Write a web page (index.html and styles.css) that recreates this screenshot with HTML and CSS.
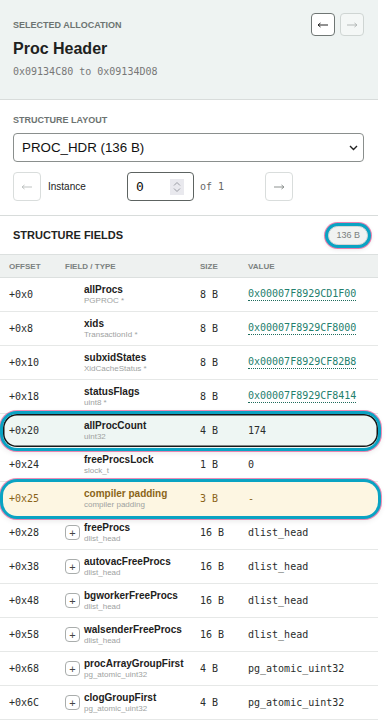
FILE: index.html
```html
<!DOCTYPE html>
<html>
  <head>
    <title>Proc Header - Structure</title>
    <link rel="stylesheet" href="styles.css">
  </head>
  <body>
    <div class="panel">
      <section class="alloc">
        <div class="alloc-top">
          <div class="label">Selected Allocation</div>
          <div class="nav">
            <button class="navbtn"><svg width="12" height="8" viewBox="0 0 12 8"><path d="M1 4h10M1 4l2.5-2M1 4l2.5 2" stroke="currentColor" fill="none" stroke-width="1"/></svg></button>
            <button class="navbtn off"><svg width="12" height="8" viewBox="0 0 12 8"><path d="M1 4h10M11 4l-2.5-2M11 4l-2.5 2" stroke="currentColor" fill="none" stroke-width="1"/></svg></button>
          </div>
        </div>
        <h2 class="title">Proc Header</h2>
        <div class="range">0x09134C80 to 0x09134D08</div>
      </section>

      <section class="layout">
        <div class="label">Structure Layout</div>
        <div class="select">
          <span>PROC_HDR (136 B)</span>
          <svg width="9" height="6" viewBox="0 0 9 6"><path d="M1 1l3.5 3.5L8 1" stroke="#222" fill="none" stroke-width="1.4"/></svg>
        </div>
        <div class="instance">
          <button class="stepbtn off"><svg width="12" height="8" viewBox="0 0 12 8"><path d="M1 4h10M1 4l2.5-2M1 4l2.5 2" stroke="currentColor" fill="none" stroke-width="1"/></svg></button>
          <span class="inst-label">Instance</span>
          <div class="numbox">
            <span>0</span>
            <span class="spin"><svg width="10" height="14" viewBox="0 0 10 14"><path d="M2 5.5l3-3 3 3M2 8.5l3 3 3-3" stroke="#9a9ca3" fill="none" stroke-width="1"/></svg></span>
          </div>
          <span class="of">of 1</span>
          <button class="stepbtn"><svg width="12" height="8" viewBox="0 0 12 8"><path d="M1 4h10M11 4l-2.5-2M11 4l-2.5 2" stroke="currentColor" fill="none" stroke-width="1"/></svg></button>
        </div>
      </section>

      <div class="fields-title">
        <h3>Structure Fields</h3>
        <span class="badge">136 B</span>
      </div>

      <div class="thead">
        <span>Offset</span>
        <span>Field / Type</span>
        <span>Size</span>
        <span>Value</span>
      </div>

      <div class="row">
        <span class="off">+0x0</span>
        <div class="field"><span class="slot"></span><div class="ft"><b>allProcs</b><small>PGPROC *</small></div></div>
        <span class="size">8 B</span>
        <span class="val addr">0x00007F8929CD1F00</span>
      </div>
      <div class="row">
        <span class="off">+0x8</span>
        <div class="field"><span class="slot"></span><div class="ft"><b>xids</b><small>TransactionId *</small></div></div>
        <span class="size">8 B</span>
        <span class="val addr">0x00007F8929CF8000</span>
      </div>
      <div class="row">
        <span class="off">+0x10</span>
        <div class="field"><span class="slot"></span><div class="ft"><b>subxidStates</b><small>XidCacheStatus *</small></div></div>
        <span class="size">8 B</span>
        <span class="val addr">0x00007F8929CF82B8</span>
      </div>
      <div class="row">
        <span class="off">+0x18</span>
        <div class="field"><span class="slot"></span><div class="ft"><b>statusFlags</b><small>uint8 *</small></div></div>
        <span class="size">8 B</span>
        <span class="val addr">0x00007F8929CF8414</span>
      </div>
      <div class="row selected">
        <span class="off">+0x20</span>
        <div class="field"><span class="slot"></span><div class="ft"><b>allProcCount</b><small>uint32</small></div></div>
        <span class="size">4 B</span>
        <span class="val">174</span>
      </div>
      <div class="row">
        <span class="off">+0x24</span>
        <div class="field"><span class="slot"></span><div class="ft"><b>freeProcsLock</b><small>slock_t</small></div></div>
        <span class="size">1 B</span>
        <span class="val">0</span>
      </div>
      <div class="row padding">
        <span class="off">+0x25</span>
        <div class="field"><span class="slot"></span><div class="ft"><b>compiler padding</b><small>compiler padding</small></div></div>
        <span class="size">3 B</span>
        <span class="val">-</span>
      </div>
      <div class="row">
        <span class="off">+0x28</span>
        <div class="field"><span class="slot"><button class="plus">+</button></span><div class="ft"><b>freeProcs</b><small>dlist_head</small></div></div>
        <span class="size">16 B</span>
        <span class="val">dlist_head</span>
      </div>
      <div class="row">
        <span class="off">+0x38</span>
        <div class="field"><span class="slot"><button class="plus">+</button></span><div class="ft"><b>autovacFreeProcs</b><small>dlist_head</small></div></div>
        <span class="size">16 B</span>
        <span class="val">dlist_head</span>
      </div>
      <div class="row">
        <span class="off">+0x48</span>
        <div class="field"><span class="slot"><button class="plus">+</button></span><div class="ft"><b>bgworkerFreeProcs</b><small>dlist_head</small></div></div>
        <span class="size">16 B</span>
        <span class="val">dlist_head</span>
      </div>
      <div class="row">
        <span class="off">+0x58</span>
        <div class="field"><span class="slot"><button class="plus">+</button></span><div class="ft"><b>walsenderFreeProcs</b><small>dlist_head</small></div></div>
        <span class="size">16 B</span>
        <span class="val">dlist_head</span>
      </div>
      <div class="row">
        <span class="off">+0x68</span>
        <div class="field"><span class="slot"><button class="plus">+</button></span><div class="ft"><b>procArrayGroupFirst</b><small>pg_atomic_uint32</small></div></div>
        <span class="size">4 B</span>
        <span class="val">pg_atomic_uint32</span>
      </div>
      <div class="row">
        <span class="off">+0x6C</span>
        <div class="field"><span class="slot"><button class="plus">+</button></span><div class="ft"><b>clogGroupFirst</b><small>pg_atomic_uint32</small></div></div>
        <span class="size">4 B</span>
        <span class="val">pg_atomic_uint32</span>
      </div>
    </div>
  </body>
</html>
```

FILE: styles.css
```css
body { margin: 0; background: #fff; font-family: "Liberation Sans", Arial, sans-serif; color: #222; overflow: hidden; }
.panel { width: 378px; }
button { font-family: inherit; padding: 0; background: #fff; cursor: pointer; }

.label { font-size: 9px; font-weight: bold; text-transform: uppercase; color: #6c7371; line-height: 12px; }

.alloc { background: #eef3f2; padding: 13px 14px 20px 13px; border-bottom: 1px solid #d8dcdb; }
.alloc-top { display: flex; justify-content: space-between; align-items: center; height: 23px; }
.nav { display: flex; gap: 5px; }
.navbtn { width: 24px; height: 23px; border: 1px solid #6f7674; border-radius: 4px; color: #222; display: flex; align-items: center; justify-content: center; }
.navbtn.off { border-color: #cfd5d3; background: #f4f7f6; color: #b4b9b8; }
.title { margin: 3px 0 0; font-size: 16px; line-height: 20px; font-weight: bold; color: #1d2120; }
.range { margin-top: 6px; font-family: "DejaVu Sans Mono", monospace; font-size: 10px; line-height: 14px; color: #777; }

.layout { padding: 14px 14px 14px 13px; border-bottom: 1px solid #d8dcdb; }
.select { margin-top: 7px; height: 29px; box-sizing: border-box; border: 1px solid #8a8f8d; border-radius: 4px; display: flex; align-items: center; justify-content: space-between; padding: 0 5px 0 8px; font-size: 13.33px; color: #111; }
.instance { margin-top: 10px; display: flex; align-items: center; height: 29px; }
.stepbtn { width: 28px; height: 29px; border: 1px solid #d9dddc; border-radius: 4px; color: #8d9290; display: flex; align-items: center; justify-content: center; }
.stepbtn.off { color: #bfc3c2; }
.inst-label { font-size: 10px; margin-left: 7px; width: 79px; color: #222; }
.numbox { width: 67px; height: 29px; box-sizing: border-box; border: 1px solid #5d6361; border-radius: 4px; display: flex; align-items: center; justify-content: space-between; padding: 0 9px 0 8px; font-family: "DejaVu Sans Mono", monospace; font-size: 13px; color: #111; }
.spin { width: 14px; height: 16px; background: #e9e9ee; display: flex; align-items: center; justify-content: center; }
.of { font-family: "DejaVu Sans Mono", monospace; font-size: 10px; color: #666; margin-left: 6px; width: 65px; }

.fields-title { height: 38px; display: flex; align-items: center; justify-content: space-between; padding: 0 10px 0 13px; }
.fields-title h3 { margin: 0; font-size: 11px; font-weight: bold; text-transform: uppercase; color: #1f2322; }
.badge { font-size: 9px; color: #7a7f7e; background: #f1f3f2; border: 1px solid #d3d7d6; border-radius: 10px; padding: 0 7px; height: 19px; box-sizing: border-box; line-height: 17px; box-shadow: 0 0 0 3px #0aa3c3, 0 0 0 4px rgba(226, 50, 128, 0.6), 0 1px 5px 3px rgba(0, 0, 0, 0.12); }

.thead, .row { display: grid; grid-template-columns: 56px 135px 48px 1fr; align-items: center; padding-left: 9px; }
.thead { height: 24px; box-sizing: border-box; background: #eef1f0; border-top: 1px solid #dce0df; border-bottom: 1px solid #dce0df; font-size: 8px; font-weight: bold; text-transform: uppercase; color: #7b8180; }
.row { height: 34px; box-sizing: border-box; border-bottom: 1px solid #e6e8e7; }
.off, .size, .val { font-family: "DejaVu Sans Mono", monospace; font-size: 10px; color: #2a2d2c; white-space: pre; }
.addr { color: #23806d; justify-self: start; border-bottom: 1px dotted #1e6b5c; line-height: 12px; }
.field { display: flex; align-items: center; gap: 4px; }
.slot { width: 15px; display: flex; }
.plus { width: 15px; height: 15px; border: 1px solid #a9adac; border-radius: 4px; font-size: 11px; line-height: 12px; color: #444; }
.ft { display: flex; flex-direction: column; }
.ft b { font-size: 10px; line-height: 12px; color: #1d2120; white-space: nowrap; }
.ft small { font-size: 8px; line-height: 10px; color: #9ea2a1; white-space: nowrap; }

.row.selected, .row.padding { margin-left: 3px; padding-left: 6px; grid-template-columns: 56px 135px 48px 1fr; border-radius: 14px; border-bottom-color: transparent; position: relative; }
.row.selected { background: #eef6f3; box-shadow: inset 0 0 0 1.5px #151818, 0 0 0 3px #0aa3c3, 0 0 0 4px rgba(226, 50, 128, 0.55), 0 2px 6px 2px rgba(0, 0, 0, 0.12); }
.row.padding { background: #fdf6e2; box-shadow: 0 0 0 3px #0aa3c3, 0 0 0 4px rgba(226, 50, 128, 0.55), 0 2px 6px 2px rgba(0, 0, 0, 0.12); }
.row.padding .off, .row.padding .size, .row.padding .val, .row.padding .ft b { color: #8a6418; }
```
